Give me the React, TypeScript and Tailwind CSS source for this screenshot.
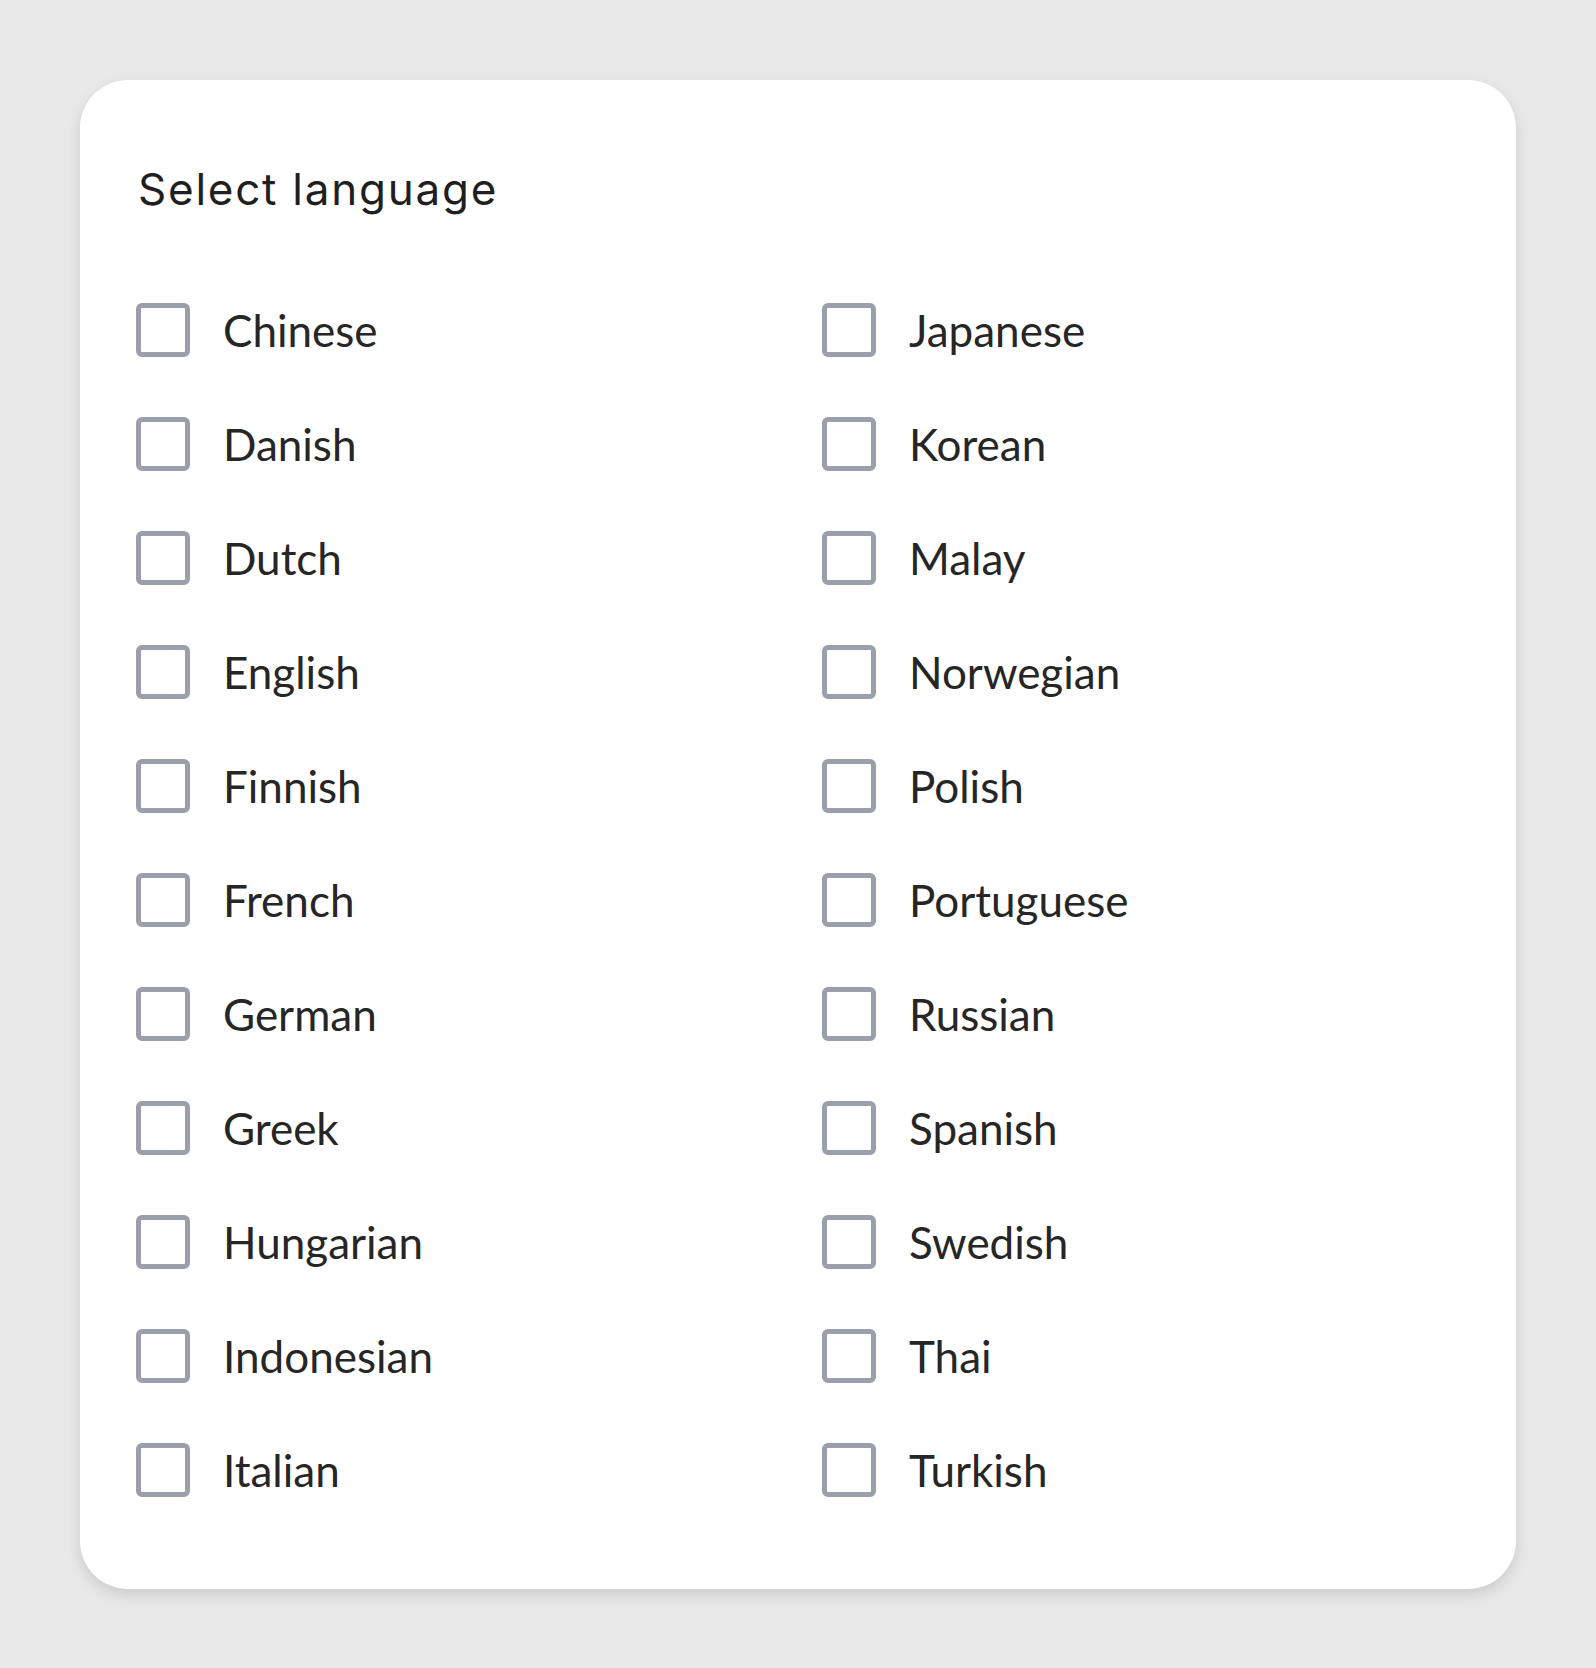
const left = ['Chinese', 'Danish', 'Dutch', 'English', 'Finnish', 'French', 'German', 'Greek', 'Hungarian', 'Indonesian', 'Italian'];
const right = ['Japanese', 'Korean', 'Malay', 'Norwegian', 'Polish', 'Portuguese', 'Russian', 'Spanish', 'Swedish', 'Thai', 'Turkish'];

function Option({ label }: { label: string }) {
  return (
    <label className="h-[114px] flex items-center cursor-pointer">
      <span className="w-[54px] h-[54px] shrink-0 border-[5px] border-[#9aa0ab] rounded-[6px] bg-white"></span>
      <span className="ml-[33px] text-[44px] leading-none text-[#262626]" style={{ fontFamily: 'Lato, sans-serif' }}>
        {label}
      </span>
    </label>
  );
}

export default function App() {
  const rows = left.map((l, i) => [l, right[i]]);
  return (
    <div className="min-h-[1668px] bg-[#e8e8e8] px-20 pt-20">
      <div className="bg-white rounded-[48px] shadow-[0_6px_14px_rgba(0,0,0,0.12)] px-14 pt-[87px] pb-[62px]">
        <h1 className="ml-[2px] text-[44px] leading-none tracking-[1.75px] text-[#1f1f1f] font-normal" style={{ fontFamily: 'Inter, sans-serif' }}>
          Select language
        </h1>
        <div className="mt-[62px] grid grid-cols-2 gap-x-12">
          {rows.map(([l, r]) => (
            <div key={l} className="contents">
              <Option label={l} />
              <Option label={r} />
            </div>
          ))}
        </div>
      </div>
    </div>
  );
}
